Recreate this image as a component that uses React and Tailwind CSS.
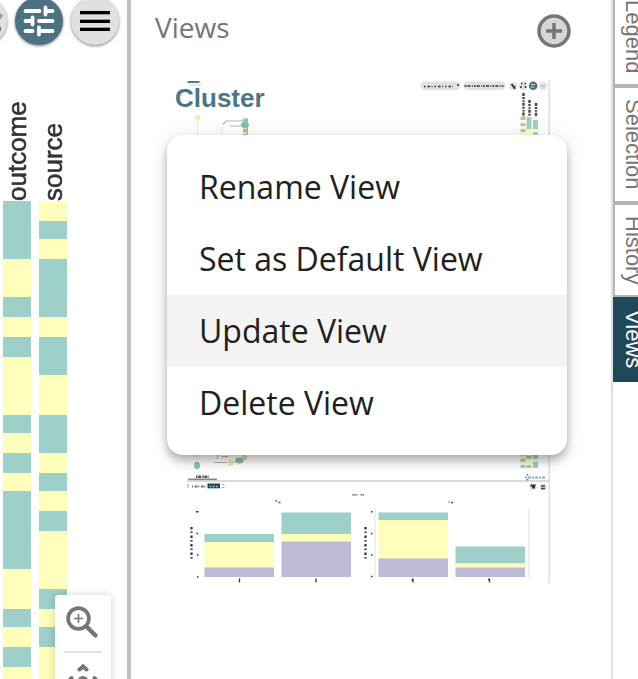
import React from "react";

const TEAL = "#9dd0c8";
const YELLOW = "#ffffbc";
const PURPLE = "#bdb9d7";

const outcomeRuns = [58, 38, 20, 20, 20, 58, 18, 20, 20, 18, 78, 40, 18, 20, 20, 20];
const sourceRuns = [20, 18, 20, 58, 20, 38, 40, 38, 20, 18, 20, 20, 58, 20, 18, 20, 40];

function HeatColumn({ label, runs, tealFirst }) {
  return (
    <div className="flex w-7 shrink-0 flex-col">
      <div className="flex h-[156px] items-center justify-center text-[26px] leading-7 text-[#333]">
        <span className="h-full rotate-180 blur-[0.6px] [-webkit-text-stroke:0.6px_#333] [writing-mode:vertical-rl]">
          {label}
        </span>
      </div>
      {runs.map((height, i) => (
        <div
          key={i}
          className={"shrink-0 " + ((i % 2 === 0) === tealFirst ? "bg-[#9dd0c8]" : "bg-[#ffffbc]")}
          style={{ height }}
        />
      ))}
    </div>
  );
}

function RoundButton({ label, active, children }) {
  return (
    <button
      type="button"
      aria-label={label}
      className={
        "h-12 w-12 shrink-0 rounded-full shadow-[0_1px_3px_rgba(0,0,0,0.5)] " +
        (active ? "bg-[#4c7180]" : "bg-[#e0e0e0]")
      }
    >
      <svg viewBox="0 0 48 48" className="h-12 w-12">
        {children}
      </svg>
    </button>
  );
}

function HeatmapPanel() {
  return (
    <section className="relative w-[131px] shrink-0 overflow-hidden border-r-4 border-[#bfbfbf]">
      <div className="-mt-[3px] flex justify-end gap-2 pr-2">
        <RoundButton label="Edit">
          <path d="M38 23l4.500-5.500" stroke="#999" strokeWidth="4" fill="none" />
          <path d="M34 32h7.500" stroke="#000" strokeWidth="4" />
        </RoundButton>
        <RoundButton label="Filters" active>
          <g stroke="#fff" strokeWidth="3.8" strokeLinecap="round" fill="none">
            <path d="M10.500 14H24.500M32 14H37.500M10.500 24H17M24 24H37.500M10.500 34H17.500M25 34H37.500" />
            <path d="M30.500 10.500V17.500M17.500 20.500V27.500M24 30.500V37.500" />
          </g>
        </RoundButton>
        <RoundButton label="Menu">
          <path d="M9 17h30v1H9zM9 22h30v1H9zM9 30h30v1H9z" fill="#999" />
          <path d="M9 14h30v3H9zM9 23h30v3H9zM9 31h30v3H9z" fill="#000" />
        </RoundButton>
      </div>
      <div className="flex gap-2 pl-[3px]">
        <HeatColumn label="outcome" runs={outcomeRuns} tealFirst />
        <HeatColumn label="source" runs={sourceRuns} tealFirst={false} />
      </div>
      <div className="absolute right-4 top-[595px] w-14 rounded bg-white shadow-[0_1px_10px_rgba(0,0,0,0.2)]">
        <button type="button" aria-label="Zoom in" className="block h-14 w-14">
          <svg viewBox="0 0 56 56" className="h-14 w-14" fill="none" stroke="#757575">
            <circle cx="23.500" cy="23.500" r="10.400" strokeWidth="3.600" />
            <path d="M23.500 19v9M19 23.500h9" strokeWidth="1.600" />
            <path d="M32.500 32.500l8 8" strokeWidth="4.400" strokeLinecap="round" />
          </svg>
        </button>
        <hr className="mx-[9px] border-t-2 border-[#e0e0e0]" />
        <button type="button" aria-label="Pan" className="block h-14 w-14">
          <svg viewBox="0 0 56 56" className="h-14 w-14" fill="none" stroke="#757575" strokeWidth="4">
            <path d="M24.500 16.500L28 13.500l3.500 3M16.500 25L13.500 28.500l3 3.500M39.500 25L42.500 28.500l-3 3.500M24.500 40.500L28 43.500l3.500-3" strokeLinecap="round" />
            <circle cx="28" cy="28.500" r="5.500" fill="#757575" stroke="none" />
          </svg>
        </button>
      </div>
    </section>
  );
}

const bars = [
  { x: 204.500, parts: [[534, 8, TEAL], [542, 26, YELLOW], [567.500, 9.500, PURPLE]] },
  { x: 281.500, parts: [[512.500, 21.500, TEAL], [534, 8, YELLOW], [541.500, 35.500, PURPLE]] },
  { x: 378.500, parts: [[512.500, 8, TEAL], [520, 39, YELLOW], [558.500, 18.500, PURPLE]] },
  { x: 455.500, parts: [[546.500, 17, TEAL], [563.500, 4.500, YELLOW], [567.500, 9.500, PURPLE]] },
];

const stripes = Array.from({ length: 115 }, (_, i) => i);

function ViewPreview() {
  return (
    <svg viewBox="184 80 366 503" className="block w-full" role="img" aria-label="Preview of the Cluster view">
      <path d="M187.500 82h12" stroke="#2b5967" strokeWidth="1.600" />
      <path d="M189 85h12" stroke="#dfe6e6" strokeWidth="2" />
      <path d="M549.200 80V583" stroke="#e0e0e0" strokeWidth="1.600" />
      {/* toolbar */}
      <g fill="#e2e2e2">
        <rect x="420.500" y="81.500" width="40" height="8.500" rx="4.200" />
        <rect x="463.500" y="81.500" width="42" height="8.500" rx="4.200" />
        <circle cx="513" cy="86" r="4" />
        <circle cx="523" cy="86" r="4" />
        <circle cx="543" cy="86" r="4" />
      </g>
      <circle cx="533.200" cy="85.700" r="4.300" fill="#4c7180" />
      <path d="M531 84.500h4M531 87h3" stroke="#c9dbe0" strokeWidth="1" />
      <g fill="none" stroke="#333" strokeWidth="1.500">
        <path d="M424 86.500h29" strokeDasharray="1.500 2 2.500 1.500 1 2" strokeWidth="1.300" />
        <path d="M457 85h2" />
        <path d="M464.500 86h39" strokeDasharray="2 1 3 1.300 1 1" strokeWidth="1.700" />
        <path d="M511.500 84l3 4M514.500 86v3" strokeWidth="1.800" />
        <path d="M521 83.500h1.500M524.500 83.500h1.500M521 86v2M525.500 86v2" />
      </g>
      <path d="M541 86h4" stroke="#aaa" strokeWidth="1" />
      {/* annotation labels and stripes */}
      <g fill="none" stroke="#444" strokeWidth="2.400" strokeDasharray="3 1 2 1.200 1.500 1">
        <path d="M523.500 93V117M529.500 100V117M536 103V117" />
      </g>
      {stripes.map((i) => (
        <g key={i}>
          <rect x="520.500" y={117 + i * 3.052} width="5" height="3.052" fill={i % 2 ? YELLOW : i % 3 ? PURPLE : TEAL} />
          <rect x="526.500" y={117 + i * 3.052} width="5" height="3.052" fill={i < 3 || i % 3 === 0 ? TEAL : YELLOW} />
          <rect x="533" y={117 + i * 3.052} width="5" height="3.052" fill={i % 4 === 0 ? YELLOW : TEAL} />
        </g>
      ))}
      {/* tree */}
      <path d="M197.500 119V460M222 126V452" stroke="#e4e4e4" strokeWidth="0.800" fill="none" />
      <circle cx="197.500" cy="117.500" r="2.800" fill="#f3f3a5" />
      <path d="M223 124.500l3-3.500H243M230 126H242" stroke="#b8b8b8" strokeWidth="1.200" fill="none" />
      <path d="M245.500 118V140" stroke="#8fc5b9" strokeWidth="5" />
      <path d="M244.500 117V140" stroke="#efefaa" strokeWidth="4" strokeDasharray="2 3" />
      <ellipse cx="245" cy="125" rx="4" ry="3" fill="#84bdb2" />
      <ellipse cx="197" cy="465.500" rx="3" ry="3.800" fill="#8fc3b8" />
      <path d="M217.500 453v6M222 456.500h6M214 462.500h13M232 462h6" stroke="#b5b5b5" strokeWidth="1" fill="none" />
      <circle cx="230.500" cy="463" r="2.800" fill="#e9e9a5" />
      <ellipse cx="239.500" cy="460.500" rx="4.200" ry="3" fill="#86bbb0" />
      <circle cx="244.500" cy="457.500" r="2.800" fill="#e0e0a0" />
      {/* lower panel frame */}
      <path d="M187 481H549" stroke="#cecece" strokeWidth="1.600" />
      <path d="M188 479.300h29" stroke="#888" strokeWidth="1.600" />
      <path d="M196 476.800h13" stroke="#555" strokeWidth="2.500" strokeDasharray="1.500 0.700 3 1" />
      <path d="M525 477.500h21" stroke="#8ca9b5" strokeWidth="2.200" strokeDasharray="2 1 3 1" />
      <path d="M527.500 474v1.500M527.500 479v1.500" stroke="#4c7180" strokeWidth="1.500" />
      <path d="M188 484v4" stroke="#888" strokeWidth="0.800" />
      <path d="M192 486.500h14" stroke="#777" strokeWidth="2" strokeDasharray="1 1.500 3 0.800" />
      <rect x="207.500" y="483.500" width="12.500" height="4.800" fill="#1f4a58" />
      <path d="M210 486.500h8" stroke="#b6cbd1" strokeWidth="1.600" strokeDasharray="1.500 1.500" />
      <path d="M222 484.500h2.500M222 487.500h2.500" stroke="#aaa" strokeWidth="1" />
      <circle cx="533" cy="487" r="3.800" fill="#e5e5e5" />
      <circle cx="543" cy="487" r="3.800" fill="#e5e5e5" />
      <path d="M530.500 485.500h5M532 487.500h3" stroke="#333" strokeWidth="2" />
      <path d="M541 486h4M541 488.500h4" stroke="#444" strokeWidth="1.700" />
      {/* charts */}
      <g stroke="#555" fill="none" strokeWidth="1.300">
        <path d="M352.500 494.800h5M360.500 494.800h4" strokeDasharray="1.500 0.500" />
        <path d="M275.500 501h1.500M278.500 502.500h2M448.500 502h1M451 502.500h2" strokeWidth="1.600" />
      </g>
      <path d="M375 508V577M529 508V577" stroke="#e6e6e6" strokeWidth="1.200" />
      <g stroke="#333" strokeWidth="2" fill="none">
        <path d="M196 511.700h2.500M196.500 533.500h1.500M197 555h1.500M197 577h1.500M371 511.700h1.500M371 533.500h1.500M371 555h1.500M371 576.500h1.500" strokeWidth="1.400" />
        <path d="M191.500 527V560M365.500 527V560" strokeWidth="2.200" strokeDasharray="2.500 2 1.500 2.500" />
        <path d="M239.500 578.500v4M316 578.500v4M413 578.500v4M489.500 578.500v4M411.500 580h2M488 579.500h2" strokeWidth="1.300" />
      </g>
      {bars.map((bar) =>
        bar.parts.map(([y, height, fill]) => (
          <rect key={bar.x + "-" + y} x={bar.x} y={y} width="69.500" height={height} fill={fill} />
        ))
      )}
    </svg>
  );
}

const actions = ["Rename View", "Set as Default View", "Update View", "Delete View"];

function ViewsPanel() {
  return (
    <main className="relative min-w-0 flex-1">
      <header className="flex h-[62px] items-center justify-between pl-6 pr-10">
        <h1 className="-mt-2 font-['Open_Sans','Noto_Sans',sans-serif] text-[28px] leading-10 text-[#757575]">
          Views
        </h1>
        <button type="button" aria-label="Add view" className="h-[34px] w-[34px]">
          <svg viewBox="0 0 34 34" className="h-full w-full" stroke="#757575" strokeWidth="3.500">
            <circle cx="17" cy="17" r="15" fill="#d6d6d6" />
            <path d="M17 9v16M9 17h16" />
          </svg>
        </button>
      </header>
      <article className="relative ml-[53px] mr-[61px] pt-[18px]">
        <ViewPreview />
        <h2 className="absolute -left-[9px] top-5 text-[26px] font-bold leading-8 text-[#4c7685]">Cluster</h2>
      </article>
      <div
        role="menu"
        className="absolute left-9 right-11 top-[135px] flex flex-col rounded-2xl bg-white py-4 shadow-[0_4px_8px_-2px_rgba(0,0,0,0.2),0_8px_10px_0_rgba(0,0,0,0.14),0_2px_20px_0_rgba(0,0,0,0.12)]"
      >
        {actions.map((action) => (
          <button
            key={action}
            type="button"
            role="menuitem"
            className={
              "h-[72px] whitespace-nowrap px-8 text-left font-['Open_Sans','Noto_Sans',sans-serif] text-[32px] leading-[48px] text-[#212121] " +
              (action === "Update View" ? "bg-[#f4f4f4]" : "")
            }
          >
            {action}
          </button>
        ))}
      </div>
    </main>
  );
}

const tabs = [
  { name: "Legend", size: "h-[98px]" },
  { name: "Selection", size: "h-[117px]" },
  { name: "History", size: "h-[94px]" },
  { name: "Views", size: "h-[85px]", active: true },
];

function TabRail() {
  return (
    <nav className="w-[27px] shrink-0 overflow-hidden border-l-2 border-[#e0e0e0]">
      <div className="-mt-3 flex flex-col">
        {tabs.map((tab) => (
          <button
            key={tab.name}
            type="button"
            className={
              "flex w-10 shrink-0 items-center justify-center text-[22px] leading-6 " +
              tab.size +
              (tab.active ? " bg-[#1f4858] text-white" : " border-2 border-[#b5b5b5] text-[#757575]")
            }
          >
            <span className="[writing-mode:vertical-rl]">{tab.name}</span>
          </button>
        ))}
      </div>
    </nav>
  );
}

export default function App() {
  return (
    <div className="flex h-screen overflow-hidden bg-white font-['Liberation_Sans',sans-serif]">
      <HeatmapPanel />
      <ViewsPanel />
      <TabRail />
    </div>
  );
}
